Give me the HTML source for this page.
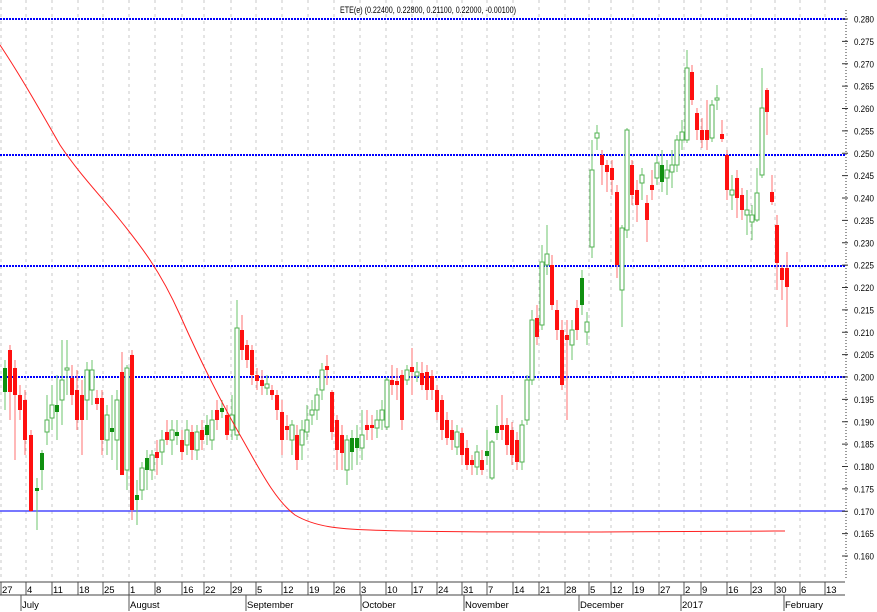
<!DOCTYPE html>
<html><head><meta charset="utf-8">
<style>
html,body{margin:0;padding:0;background:#fff;width:877px;height:612px;overflow:hidden}
svg{display:block;font-family:"Liberation Sans",sans-serif}
</style></head><body>
<svg id="s" width="877" height="612" viewBox="0 0 877 612" xmlns="http://www.w3.org/2000/svg">
<rect width="877" height="612" fill="#fff"/>
<g id="grid"></g>
<text x="428" y="13" font-size="9.5" text-anchor="middle" fill="#000" textLength="176" lengthAdjust="spacingAndGlyphs">ETE(e) (0.22400, 0.22800, 0.21100, 0.22000, -0.00100)</text>
<g stroke="#0000ff" stroke-width="2" stroke-dasharray="2,1">
<line x1="0" y1="19" x2="845" y2="19"/>
<line x1="0" y1="155" x2="845" y2="155"/>
<line x1="0" y1="266" x2="845" y2="266"/>
<line x1="0" y1="377" x2="845" y2="377"/>
</g>
<line x1="0" y1="511" x2="845" y2="511" stroke="#4a4aff" stroke-width="1.5"/>
<g id="candles"></g>
<path d="M0,45 C20,75 40,110 60,145 C80,175 100,195 120,220 C140,245 160,270 180,315 C200,360 220,400 240,435 C260,470 275,500 295,515 C315,527 340,529 370,530 C420,532 500,532 600,532 C700,531 740,531 785,531" fill="none" stroke="#ff2020" stroke-width="1"/>
<g id="axis"></g>
<g id="xaxis"></g>
</svg>
<script>
var NS="http://www.w3.org/2000/svg";
function el(t,a,p,txt){var e=document.createElementNS(NS,t);for(var k in a)e.setAttribute(k,a[k]);if(txt!==undefined)e.textContent=txt;p.appendChild(e);return e;}
var weeks=[[2,"27"],[27,"4"],[53,"11"],[79,"18"],[104,"25"],[130,"1"],[156,"8"],[183,"16"],[205,"22"],[232,"29"],[257,"5"],[283,"12"],[309,"19"],[335,"26"],[361,"3"],[387,"10"],[413,"17"],[438,"24"],[463,"31"],[488,"7"],[514,"14"],[540,"21"],[566,"28"],[590,"5"],[612,"12"],[634,"19"],[660,"27"],[685,"2"],[702,"9"],[728,"16"],[752,"23"],[776,"30"],[801,"6"],[826,"13"]];
var g=document.getElementById("grid"),xa=document.getElementById("xaxis");
weeks.forEach(function(w){
 el("line",{x1:w[0]-1,y1:0,x2:w[0]-1,y2:580,stroke:"#c8c8c8","stroke-width":1,"stroke-dasharray":"3,4"},g);
 el("line",{x1:w[0]-1,y1:582,x2:w[0]-1,y2:595,stroke:"#555","stroke-width":1},xa);
 el("text",{x:w[0],y:593,"font-size":9.5,fill:"#000"},xa,w[1]);
});
el("line",{x1:0,y1:582,x2:845,y2:582,stroke:"#444","stroke-width":1},xa);
el("line",{x1:0,y1:595,x2:845,y2:595,stroke:"#444","stroke-width":1},xa);
var months=[[22,"July"],[130,"August"],[247,"September"],[362,"October"],[465,"November"],[580,"December"],[682,"2017"],[785,"February"]];
months.forEach(function(m){
 el("line",{x1:m[0]-1,y1:595,x2:m[0]-1,y2:611,stroke:"#555"},xa);
 el("text",{x:m[0],y:608,"font-size":9.5,fill:"#000"},xa,m[1]);
});
var ax=document.getElementById("axis");
el("line",{x1:846,y1:10,x2:846,y2:580,stroke:"#333","stroke-dasharray":"1,2"},ax);
for(var i=0;i<=24;i++){var p=0.280-i*0.005;var y=19+(0.280-p)*4475;
 el("line",{x1:842,y1:y,x2:848,y2:y,stroke:"#333"},ax);
 el("text",{x:854,y:y+3.5,"font-size":9,fill:"#000",textLength:20,lengthAdjust:"spacingAndGlyphs"},ax,p.toFixed(3));}
var C=[
[5,368,392,"G",360,410],[10,350,392,"r",345,420],[15,368,395,"r",360,460],[20,395,410,"r",385,420],[25,400,440,"r",390,455],[31,435,511,"r",430,512],[37,488,491,"G",478,530],[42,453,470,"G",450,490],[47,420,432,"g",395,445],[52,405,418,"g",385,430],[57,405,412,"G",375,440],[62,380,400,"g",340,425],[67,368,370,"g",340,395],[72,378,395,"r",365,405],[77,390,420,"r",370,430],[82,395,420,"r",380,455],[87,370,400,"g",362,420],[92,370,390,"g",360,405],[97,398,404,"r",390,410],[102,398,440,"r",390,455],[107,415,440,"g",405,455],[112,428,432,"G",395,460],[117,400,440,"g",390,470],[122,372,475,"r",352,475],[127,368,470,"g",365,490],[132,355,510,"r",350,520],[137,495,500,"G",480,525],[142,468,490,"g",462,500],[147,458,470,"G",450,490],[152,455,470,"g",450,480],[157,452,458,"r",440,475],[162,440,452,"g",430,465],[167,432,440,"r",420,445],[172,430,440,"g",420,455],[177,432,436,"G",420,445],[182,440,452,"r",430,460],[187,430,445,"g",420,455],[192,432,450,"r",425,460],[197,432,450,"g",425,460],[202,430,440,"r",420,450],[207,425,435,"G",415,445],[212,420,440,"g",410,450],[217,410,420,"r",400,430],[222,408,412,"G",400,418],[227,415,435,"r",405,440],[232,415,430,"g",395,440],[237,328,435,"g",300,440],[242,330,350,"r",315,360],[247,345,360,"r",340,368],[252,350,375,"r",345,385],[257,375,381,"r",368,390],[262,380,386,"r",370,395],[267,384,388,"g",375,395],[272,390,395,"r",385,400],[277,395,410,"r",390,420],[282,412,440,"r",400,455],[287,426,430,"r",415,440],[292,425,440,"g",420,455],[297,435,460,"r",425,470],[302,430,445,"g",420,460],[307,420,432,"g",405,440],[312,410,415,"g",400,425],[317,395,410,"g",388,420],[322,370,390,"g",363,400],[327,366,370,"r",355,385],[332,392,432,"r",390,440],[337,420,450,"r",415,470],[342,435,453,"r",425,470],[347,440,470,"g",435,485],[352,438,452,"G",430,470],[357,438,448,"G",425,465],[362,435,448,"g",410,460],[367,425,430,"r",410,440],[372,425,428,"r",415,440],[377,420,428,"g",410,438],[382,410,420,"g",400,430],[387,380,427,"g",377,430],[392,380,385,"r",365,395],[397,381,385,"r",368,400],[402,375,420,"r",370,430],[407,370,380,"g",365,385],[412,367,372,"r",348,395],[417,372,376,"g",362,382],[422,373,385,"r",362,390],[427,372,390,"r",365,400],[432,376,390,"r",370,400],[437,390,412,"r",385,420],[442,400,430,"r",395,440],[447,420,438,"r",412,445],[452,430,440,"r",420,450],[457,432,447,"g",425,455],[462,433,455,"r",428,465],[467,448,465,"r",440,470],[472,460,465,"r",455,475],[477,452,467,"g",445,475],[482,460,470,"r",450,475],[487,451,456,"G",430,465],[492,442,478,"g",440,480],[497,426,433,"G",405,440],[502,425,430,"r",395,440],[507,425,445,"r",418,455],[512,430,455,"r",422,465],[517,440,462,"r",432,470],[522,425,462,"g",420,470],[527,380,420,"g",375,425],[532,320,380,"g",310,385],[537,318,337,"r",305,345],[542,262,325,"g",245,330],[547,254,265,"g",225,275],[552,265,305,"r",255,310],[557,310,330,"r",300,340],[562,330,385,"r",320,390],[567,335,340,"r",320,420],[572,330,345,"g",320,360],[577,308,330,"r",300,340],[582,278,305,"G",270,315],[587,322,332,"g",312,345],[592,170,247,"g",140,258],[597,133,138,"g",125,150],[602,155,165,"r",150,185],[607,165,172,"r",160,192],[612,168,180,"r",160,195],[617,192,265,"r",185,278],[622,228,290,"g",225,327],[627,130,230,"g",128,238],[632,165,195,"r",160,205],[637,190,205,"r",180,222],[642,175,183,"g",168,200],[647,203,220,"r",195,242],[652,185,190,"r",170,200],[657,163,178,"g",155,185],[662,165,182,"G",150,192],[667,170,178,"g",160,195],[672,165,172,"g",150,188],[677,140,165,"g",135,172],[682,132,140,"g",120,150],[687,68,140,"g",50,143],[692,72,100,"r",65,105],[697,113,130,"r",108,140],[702,130,140,"r",118,148],[707,130,140,"r",100,150],[712,105,138,"g",100,142],[717,98,100,"g",85,110],[722,134,139,"r",120,142],[727,155,190,"r",150,200],[732,190,195,"g",175,210],[737,178,198,"r",170,218],[742,195,210,"r",188,220],[747,210,215,"g",190,235],[752,215,222,"g",205,240],[757,193,220,"g",168,222],[762,108,175,"g",68,178],[767,90,112,"r",88,135],[772,192,202,"r",175,205],[777,225,263,"r",215,290],[782,268,280,"r",265,300],[787,268,287,"r",252,327]
];
var cg=document.getElementById("candles");
C.forEach(function(c){
 var x=c[0],col=c[3];
 var wc=col=="r"?"#ff7070":"#6cc46c";
 el("line",{x1:x,y1:c[4],x2:x,y2:c[5],stroke:wc,"stroke-width":1},cg);
 var h=Math.max(c[2]-c[1],2);
 if(col=="r")el("rect",{x:x-2,y:c[1],width:4,height:h,fill:"#ff1010"},cg);
 else if(col=="G")el("rect",{x:x-2,y:c[1],width:4,height:h,fill:"#109010"},cg);
 else el("rect",{x:x-2,y:c[1],width:4,height:h,fill:"#fff",stroke:"#50b050","stroke-width":1},cg);
});
</script>
</body></html>
